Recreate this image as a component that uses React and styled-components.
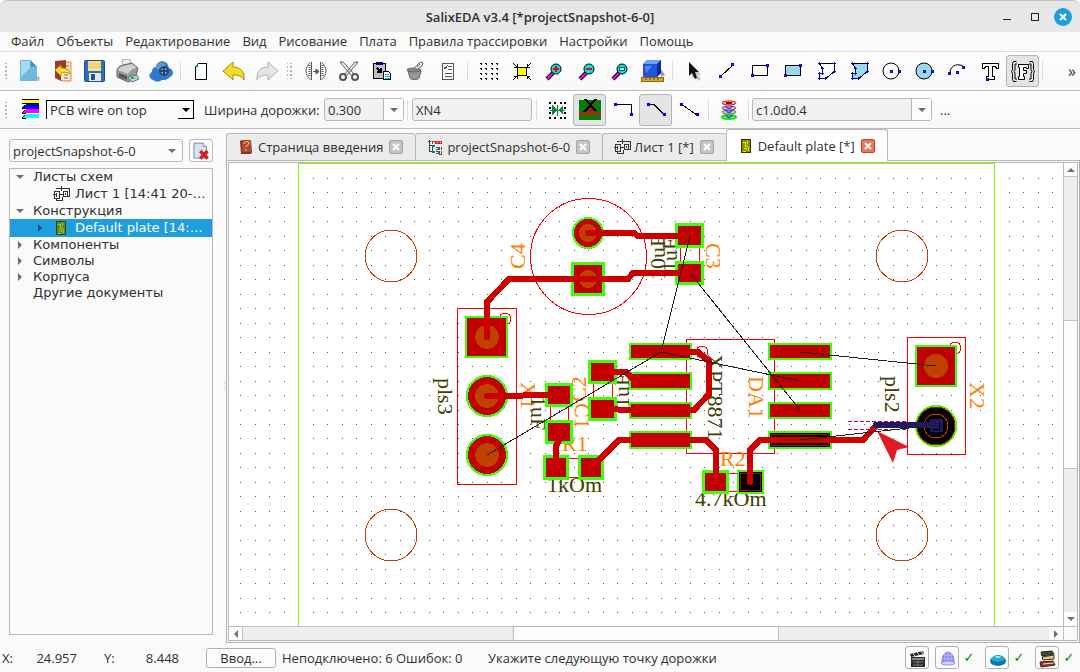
import React from 'react';
import styled, { createGlobalStyle } from 'styled-components';

const GlobalStyle = createGlobalStyle`
	* {
		box-sizing: border-box;
	}
	body {
		margin: 0;
		background: #fafafa;
		color: #303030;
		font: 13px/16px 'Open Sans', 'Noto Sans', sans-serif;
	}
	button,
	input,
	select {
		font: inherit;
		color: inherit;
	}
	svg {
		display: block;
		flex: none;
	}
`;

/* ---------- icons ---------- */

const Handle = ({ x, y }) => (
	<g>
		<rect x={x - 1} y={y - 1} width="3" height="3" fill="#0000ff" />
		<rect x={x} y={y} width="1" height="1" fill="#ff0000" />
	</g>
);

const Magnifier = ({ children }) => (
	<>
		<path d="M5 20l6-6" stroke="#000" strokeWidth="4" />
		<path d="M5 20l6-6" stroke="#ff00ff" strokeWidth="2" />
		<circle cx="14" cy="10" r="5" fill="#00e5e5" stroke="#000" />
		{children}
	</>
);

const polyPath = 'M6 4h15v8l-9 7h-6v-5h3v-5z';
const polyPoints = [[6, 4], [21, 4], [21, 12], [12, 19], [6, 19], [6, 14], [9, 14], [9, 9]];

const shapes = {
	file: (
		<>
			<path d="M5 22h17l1-3-2-2z" fill="#b9bcbe" />
			<path d="M3.500 1.500h10l6 6v14h-16z" fill="#6fb9de" stroke="#79b4d0" />
			<path d="M4 2h9v7l-9 9z" fill="#a5dbf0" />
			<path d="M13.500 1.500v6h6z" fill="#3c93c4" />
		</>
	),
	open: (
		<>
			<path d="M12 3h9v19h-9z" fill="#f0dfc4" stroke="#d98b4b" />
			<path d="M15 7h4M15 11h4M15 15h4M15 18h4" stroke="#806a58" />
			<path d="M5 2l11-1v8l-5 13-6-3z" fill="#963a30" />
			<path d="M11 11h8v10h-8z" fill="#f3e6cf" />
			<path d="M14 13h4M14 16h4M14 19h4" stroke="#806a58" />
			<path d="M5 11l6-5v3c5 0 9 2 9 6-3-2-6-2-9-1v3z" fill="#ffe03a" stroke="#c79500" />
		</>
	),
	save: (
		<>
			<rect x="1.500" y="1.500" width="20" height="21" rx="1" fill="#2f6fb6" stroke="#1d4f90" />
			<rect x="5" y="2" width="13" height="10" fill="#fbe08a" />
			<path d="M5 5h13M5 8h13" stroke="#e7bd4e" />
			<path d="M6 14h12v8h-12z" fill="#e2e8ee" />
			<path d="M8 15h4v6h-4z" fill="#31527f" />
		</>
	),
	print: (
		<>
			<path d="M6 1l8-1 1 8-7 2z" fill="#e8f1fb" stroke="#9aaec4" />
			<path d="M1 12c0-4 3-5 6-6l9-2 6 5-3 11-7 3-11-5z" fill="#9b9b9b" stroke="#666" />
			<path d="M2 11c2-3 4-4 6-4l8-2 5 4c-4 0-7 2-9 6z" fill="#d2d2d2" />
			<path d="M3 14l8 3v4l-8-3z" fill="#555" />
			<path d="M12 18l9-2 2 4-7 3z" fill="#b9dcf5" stroke="#4a7dac" />
			<path d="M15 19h3" stroke="#35a02c" strokeWidth="2" />
			<path d="M19 19h2" stroke="#e0c020" strokeWidth="2" />
		</>
	),
	cloud: (
		<>
			<path d="M4 21c-4-1-5-6-1-8 0-4 2-5 4-5 0-4 5-7 9-5 3 1 3 4 4 6 5 1 5 8 1 9-3 3-5 3-8 3-3 2-6 2-9 0z" fill="#2f78cf" />
			<path d="M7 8c1-4 6-6 9-3 1 3-2 4-4 4-3 2-5 2-5-1z" fill="#5c9ae2" />
			<circle cx="15" cy="12" r="4" fill="#8fb0d8" stroke="#29466e" strokeWidth="2" />
			<path d="M12 12h6M15 9v6" stroke="#29466e" strokeWidth="2" />
		</>
	),
	page: (
		<g shapeRendering="crispEdges">
			<path d="M9.500 4.500h8v16h-11v-13z" fill="#fff" stroke="#000" />
			<path d="M9 4v4h-3z" fill="#008080" />
		</g>
	),
	undo: <path d="M1 12L11 3v5c7 0 12 4 11 13-2-4-6-5-11-5v5z" fill="#f5dc22" stroke="#a98a12" />,
	redo: <path d="M23 12L13 3v5C6 8 1 12 2 21c2-4 6-5 11-5v5z" fill="#e5e5e5" stroke="#b4b4b4" />,
	mirror: (
		<g fill="none" stroke="#555">
			<path d="M6.500 3.500c-6 4-6 13 0 17M17.500 3.500c6 4 6 13 0 17" />
			<path d="M7.500 3v18M16.500 3v18" />
			<path d="M5.500 6v12M18.500 6v12" strokeDasharray="1 1" strokeWidth="2" />
			<path d="M9 12.500h5" />
			<path d="M12 10l3 2.500-3 2.500z" fill="#555" />
		</g>
	),
	cut: (
		<g fill="none" stroke="#555">
			<path d="M3 3l3 0 12 13M21 3l-3 0L7 16M3 3l11 13M21 3L10 16" />
			<circle cx="6" cy="18" r="3" strokeWidth="2" />
			<circle cx="18" cy="18" r="3" strokeWidth="2" />
		</g>
	),
	paste: (
		<g shapeRendering="crispEdges">
			<rect x="3.500" y="4.500" width="12" height="15" fill="#c0c0c0" stroke="#000" />
			<path d="M6 3h7v3h-7z" fill="#000080" />
			<path d="M7 9l4 4M11 9v4h-4" stroke="#000" strokeWidth="2" fill="none" />
			<path d="M13.500 12.500h5l2 2v6h-7z" fill="#fff" stroke="#000" />
			<path d="M15 15.500h4M15 17.500h5M15 19.500h5" stroke="#00b0d0" />
		</g>
	),
	bucket: (
		<g stroke="#666" fill="none">
			<path d="M5 12l2 7c1 2 8 2 9 0l2-7z" fill="#999" />
			<ellipse cx="11" cy="11" rx="7" ry="2" fill="#888" />
			<path d="M11 10l4-5 3-2 2 1-1 3-4 3z" fill="#eee" />
			<path d="M14 8l3-3" />
		</g>
	),
	list: (
		<g shapeRendering="crispEdges" stroke="#555" fill="none">
			<rect x="6.500" y="4.500" width="11" height="16" />
			<path d="M12 7.500h4M12 10.500h4M9 14.500h7M9 17.500h7M8 8l1 2 3-4" />
		</g>
	),
	grid: (
		<g fill="#000" shapeRendering="crispEdges">
			{[4, 9, 14, 19].map((y) => [4, 9, 15, 20].map((x) => <path key={`${x}-${y}`} d={`M${x} ${y}h2v2h-1v-1h-1z`} />))}
		</g>
	),
	fit: (
		<g stroke="#000" fill="none" shapeRendering="crispEdges">
			<rect x="8.500" y="8.500" width="9" height="8" fill="#ffff00" />
			<path d="M4 4l4 4M22 4l-4 4M4 21l4-4M22 21l-4-4M8 5v3h-3M18 5v3h3M8 20v-3h-3M18 20v-3h3" />
		</g>
	),
	zoomIn: (
		<Magnifier>
			<path d="M11 10h6M14 7v6" stroke="#f00000" strokeWidth="2" />
		</Magnifier>
	),
	zoomOut: (
		<Magnifier>
			<path d="M11 10h6" stroke="#f00000" strokeWidth="2" />
		</Magnifier>
	),
	zoomFit: (
		<Magnifier>
			<rect x="11.500" y="8.500" width="5" height="3" fill="#d4f5f5" stroke="#006060" />
		</Magnifier>
	),
	cube: (
		<>
			<path d="M19 9l5 7-4 2z" fill="#999" />
			<path d="M2 5l4-4h14v13l-4 4h-14z" fill="#1d55dd" />
			<path d="M2 5l4-4h14l-4 4z" fill="#6fa4ff" />
			<path d="M20 1v13l-4 4v-13z" fill="#0b2d96" />
			<path d="M4 7h7l-6 7z" fill="#5c8cf5" />
			<rect x="0.500" y="18.500" width="22" height="4" fill="#dba520" stroke="#8b6510" />
			<path d="M5 19v2M9 19v2M13 19v2M17 19v2" stroke="#6a4a08" />
		</>
	),
	cursor: (
		<>
			<path d="M11 6v14l3-3 3 5 3-2-3-4h3z" fill="#c4c4c4" />
			<path d="M8 3v14l3-3 3 6 2-1-2-6h4z" fill="#111" />
		</>
	),
	line: (
		<g shapeRendering="crispEdges">
			<path d="M7 17L19 6" stroke="#000" />
			<Handle x={6} y={17} />
			<Handle x={18} y={5} />
		</g>
	),
	rect: (
		<g shapeRendering="crispEdges">
			<rect x="5.500" y="6.500" width="15" height="10" fill="none" stroke="#000" />
			<Handle x={5} y={16} />
			<Handle x={20} y={6} />
		</g>
	),
	rectFill: (
		<g shapeRendering="crispEdges">
			<rect x="5.500" y="6.500" width="15" height="10" fill="#99d9ea" stroke="#000" />
			<Handle x={5} y={16} />
			<Handle x={20} y={6} />
		</g>
	),
	poly: (
		<g shapeRendering="crispEdges">
			<path d={polyPath} transform="translate(.5 .5)" fill="none" stroke="#000" />
			{polyPoints.map(([x, y]) => <path key={`${x}-${y}`} d={`M${x - 1} ${y}h3v1h-3zM${x} ${y - 1}h1v3h-1z`} fill="#0000ff" />)}
		</g>
	),
	polyFill: (
		<g shapeRendering="crispEdges">
			<path d={polyPath} transform="translate(.5 .5)" fill="#99d9ea" stroke="#000" />
			{polyPoints.map(([x, y]) => <path key={`${x}-${y}`} d={`M${x - 1} ${y}h3v1h-3zM${x} ${y - 1}h1v3h-1z`} fill="#0000ff" />)}
		</g>
	),
	circle: (
		<>
			<circle cx="12" cy="12" r="8" fill="none" stroke="#000" />
			<Handle x={12} y={12} />
			<Handle x={20} y={12} />
		</>
	),
	circleFill: (
		<>
			<circle cx="12" cy="12" r="8" fill="#99d9ea" stroke="#000" />
			<Handle x={12} y={12} />
			<Handle x={20} y={12} />
		</>
	),
	arc: (
		<>
			<path d="M5 14C5 5 15 4 19 8" fill="none" stroke="#000" />
			<Handle x={4} y={14} />
			<Handle x={18} y={8} />
			<Handle x={12} y={13} />
		</>
	),
	text: (
		<g shapeRendering="crispEdges">
			<path d="M4.500 4.500h16v5h-2l-1-2h-3v10h2v3h-8v-3h2v-10h-3l-1 2h-2z" fill="#fff" stroke="#000" />
			<Handle x={9} y={20} />
		</g>
	),
	field: (
		<g fill="#fff" stroke="#000">
			<path d="M5.500 2.500h-3l-1 2v6l-1 2 1 2v6l1 2h3M18.500 2.500h3l1 2v6l1 2-1 2v6l-1 2h-3" fill="none" />
			<path d="M6 5h-2v6l-1 1.500 1 1.500v6h2M18 5h2v6l1 1.500-1 1.500v6h-2" fill="none" />
			<path d="M7.500 5.500h10v4h-2v-1h-3v3h3v3h-3v3h1v3h-6v-3h1v-9h-1z" />
		</g>
	),
	layers: (
		<g shapeRendering="crispEdges">
			<path d="M4 5l4-4h13v4z" fill="#ffff00" />
			<path d="M4 10l4-4h13v5h-17z" fill="#0000ff" />
			<path d="M4 15l4-4h13v4h-17z" fill="#ff00ff" />
			<path d="M4 20l4-4h13v4h-17z" fill="#00ffff" />
			<path d="M4 1.500h17M4 5.500h17M4 10.500h4M4 15.500h4M4 20.500h4M4 10l3-3M4 15l3-3M4 20l3-3" stroke="#000" />
		</g>
	),
	snap: (
		<g shapeRendering="crispEdges">
			{[4, 9, 15, 19].map((x) => [4, 19].map((y) => <rect key={`${x}-${y}`} x={x} y={y} width="2" height="2" fill="#000" />))}
			{[4, 19].map((x) => [9, 14].map((y) => <rect key={`${x}-${y}`} x={x} y={y} width="2" height="2" fill="#000" />))}
			<path d="M7 7l5 5-5 5zM18 7l-5 5 5 5z" fill="#16803c" />
			<path d="M12.500 7v11M5 12.500h15" stroke="#16803c" />
		</g>
	),
	mask: (
		<g shapeRendering="crispEdges">
			<rect x="1" y="2" width="22" height="20" fill="#00800f" />
			<rect x="8" y="7" width="9" height="7" fill="#803010" />
			<path d="M1 16h22" stroke="#ff0000" strokeWidth="2" />
			<path d="M7 1l11 12M18 1l-12 13" stroke="#000" strokeWidth="2" />
		</g>
	),
	ortho: (
		<g shapeRendering="crispEdges">
			<path d="M4 6.500h16v10" fill="none" stroke="#000" />
			<rect x="3" y="5" width="3" height="3" fill="#0000ff" />
			<rect x="19" y="15" width="3" height="3" fill="#0000ff" />
		</g>
	),
	bend: (
		<g shapeRendering="crispEdges">
			<path d="M4 6.500h6l10 10" fill="none" stroke="#000" />
			<rect x="3" y="5" width="3" height="3" fill="#0000ff" />
			<rect x="19" y="15" width="3" height="3" fill="#0000ff" />
		</g>
	),
	free: (
		<g shapeRendering="crispEdges">
			<path d="M4 6l16 11" stroke="#000" />
			<rect x="3" y="5" width="3" height="3" fill="#0000ff" />
			<rect x="19" y="15" width="3" height="3" fill="#0000ff" />
		</g>
	),
	via: (
		<g fill="#c4c4c4">
			<ellipse cx="12" cy="19" rx="7" ry="2" stroke="#00f000" strokeWidth="2" />
			<ellipse cx="12" cy="14" rx="7" ry="2" stroke="#707070" />
			<ellipse cx="12" cy="10" rx="7" ry="2" stroke="#904090" />
			<ellipse cx="12" cy="5" rx="7" ry="2" stroke="#ff0000" />
			<path d="M9 5h6" stroke="#a00" strokeWidth="2" />
			<path d="M9 8c0 3 6 3 6 0M9 12c0 3 6 3 6 0M9 17c0 3 6 3 6 0" fill="none" stroke="#0000ff" />
		</g>
	),
	sheet: (
		<g shapeRendering="crispEdges" fill="none" stroke="#333" transform="translate(4 4)">
			<path d="M3 2.500h13v8h-2M8 0v5M1 5.500h5v7h-5zM10.500 5.500h4v5h-4zM6 8.500h4M0 8.500h4M3 12v2.500h6v-4M3.500 7v4M12.500 7v2" />
		</g>
	),
	plate: (
		<g shapeRendering="crispEdges" transform="translate(7 5)">
			<rect x="0.500" y="0.500" width="9" height="13" fill="#5d8c20" stroke="#33420c" />
			<path d="M2 3h2v4h3M6 2v3M3 9h2v2M7 8v4M2 12h3" stroke="#a8c040" fill="none" />
		</g>
	),
	plateYellow: (
		<g shapeRendering="crispEdges" transform="translate(7 5)">
			<rect x="0.500" y="0.500" width="9" height="13" fill="#8c8c00" stroke="#333300" />
			<path d="M2 3h2v4h3M6 2v3M3 9h2v2M7 8v4M2 12h3" stroke="#e8e800" fill="none" />
		</g>
	),
	book: (
		<g transform="translate(6 5)">
			<path d="M0 1l2-1h9l1 13-2 1h-9z" fill="#8d2f25" />
			<path d="M2 0h9v12h-9z" fill="#a84a38" />
			<path d="M4 4c0-3 5-3 5-1 0 2-3 2-3 4M6 9v2" stroke="#ffe640" fill="none" />
		</g>
	),
	project: (
		<g shapeRendering="crispEdges" fill="none" transform="translate(4 4)">
			<path d="M1 2.500h3M2.500 1v12M2 6.500h4M2 12.500h4M9 12.500h2M5 7v6" stroke="#2a4a4a" />
			<path d="M5.500 5v-3h3v3M9.500 5v-3h2v2h-2M12.500 2h2v2h-2z" stroke="#c03030" />
			<path d="M9 8.500h2v2h-2M12.500 8v3M14.500 8v3M9 14.500h2v-3M12.500 12v3h2v-3" stroke="#555" />
			<path d="M5 6h3v2h-3zM5 12h3v2h-3z" fill="#008080" />
		</g>
	),
	removeDoc: (
		<>
			<path d="M3.500 2.500h11l4 4v14h-15z" fill="#d7e4f7" stroke="#5f7ca6" />
			<path d="M14.500 2.500v4h4" fill="#fff" stroke="#5f7ca6" />
			<path d="M11 12l9 9M20 12l-9 9" stroke="#d81e1e" strokeWidth="4" />
		</>
	),
	film: (
		<g>
			<rect x="5" y="10" width="14" height="10" fill="#2a2a2a" />
			<path d="M4 7l13-3 1 3-13 3z" fill="#222" />
			<path d="M7 6l2 3M11 5l2 3M15 4l2 3M6 12h12" stroke="#ddd" />
			<path d="M7 15h10M7 18h10M12 13v6" stroke="#777" />
		</g>
	),
	helmet: (
		<g>
			<path d="M6 15c0-13 12-13 12 0z" fill="#8585ff" stroke="#8080f0" />
			<path d="M8 8h8M7 12h10M12 5v10M9 6v9M15 6v9" stroke="#b8b8ff" />
			<ellipse cx="12" cy="16" rx="7" ry="2" fill="#d4d4ff" stroke="#8888f5" />
		</g>
	),
	blob: (
		<g>
			<ellipse cx="12" cy="14" rx="8" ry="5" fill="#087aa8" />
			<path d="M5 12c3-4 4-3 5-4h4c1 1 3 0 5 4-2 3-12 4-14 0z" fill="#26a8cc" />
			<ellipse cx="12" cy="10" rx="3" ry="1" fill="#9aeaf5" />
		</g>
	),
	books: (
		<g>
			<path d="M5 5l11-1 2 3-12 2z" fill="#38582c" stroke="#222" />
			<path d="M6 10l12-2v4l-11 1z" fill="#e6c890" stroke="#3c2a18" />
			<path d="M4 15l13-1 2 4-14 2z" fill="#8d3a2c" stroke="#3c1a14" />
			<path d="M7 17l11-1" stroke="#f0d8c0" />
		</g>
	),
};

const Icon = ({ name, size = 24 }) => (
	<svg width={size} height={size} viewBox="0 0 24 24" aria-hidden="true">
		{shapes[name]}
	</svg>
);

const Triangle = ({ dir = 'down', color = '#707070' }) => {
	const paths = {
		down: 'M0 2h8l-4 4z',
		up: 'M0 6h8l-4-4z',
		left: 'M6 0v8l-4-4z',
		right: 'M2 0v8l4-4z',
	};
	return (
		<svg width="8" height="8" aria-hidden="true">
			<path d={paths[dir]} fill={color} />
		</svg>
	);
};

/* ---------- data ---------- */

const menu = ['Файл', 'Объекты', 'Редактирование', 'Вид', 'Рисование', 'Плата', 'Правила трассировки', 'Настройки', 'Помощь'];

const mainTools = [
	'grip', 'file', 'open', 'save', 'print', 'cloud', 'sep', 'page', 'undo', 'redo',
	'grip', 'mirror', 'cut', 'paste', 'bucket', 'list', 'sep',
	'grid', 'fit', 'zoomIn', 'zoomOut', 'zoomFit', 'cube', 'sep',
	'cursor', 'line', 'rect', 'rectFill', 'poly', 'polyFill', 'circle', 'circleFill', 'arc', 'text', 'field', 'sep',
];

const tree = [
	{ label: 'Листы схем', arrow: 'down' },
	{ label: 'Лист 1 [14:41 20-06]', icon: 'sheet', child: true },
	{ label: 'Конструкция', arrow: 'down' },
	{ label: 'Default plate [14:41 20-06]', icon: 'plate', arrow: 'right', child: true, selected: true },
	{ label: 'Компоненты', arrow: 'right' },
	{ label: 'Символы', arrow: 'right' },
	{ label: 'Корпуса', arrow: 'right' },
	{ label: 'Другие документы' },
];

const tabs = [
	{ label: 'Страница введения', icon: 'book' },
	{ label: 'projectSnapshot-6-0', icon: 'project' },
	{ label: 'Лист 1 [*]', icon: 'sheet' },
	{ label: 'Default plate [*]', icon: 'plateYellow', active: true },
];

const holes = [[391, 256], [902, 256], [391, 535], [902, 535]];

const outlines = [
	[457, 308, 59, 176], [686, 339, 88, 114], [907, 337, 58, 117],
	[680, 247, 19, 15], [550, 406, 18, 15], [593, 383, 19, 15],
	[568, 458, 12, 19], [727, 473, 12, 18],
];

// x, y, width, height, border, highlighted
const pads = [
	[571, 262, 34, 34, 3], [675, 223, 29, 25, 3], [675, 261, 29, 24, 3],
	[465, 316, 43, 42, 2], [545, 383, 28, 24, 3], [545, 420, 28, 24, 3],
	[543, 455, 26, 25, 3], [578, 455, 26, 25, 3], [588, 360, 29, 24, 3], [588, 397, 29, 24, 3],
	[629, 343, 63, 17, 2], [629, 372, 63, 18, 2], [629, 402, 63, 17, 2], [629, 431, 63, 18, 2],
	[768, 343, 64, 17, 2], [768, 372, 64, 18, 2], [768, 402, 64, 17, 2], [768, 431, 64, 18, 2, true],
	[702, 470, 27, 24, 3], [737, 470, 27, 24, 2, true], [915, 345, 42, 42, 2],
];

const roundPads = [[588, 233, 16], [487, 396, 21], [487, 455, 21]];
const drills = [[588, 233, 9], [588, 279, 9], [487, 337, 12], [487, 396, 12], [487, 455, 12], [936, 366, 12]];

const traces = [
	'588,233 634,233 638,236 690,236',
	'487,337 487,302 509,279 628,279 633,273 690,273',
	'487,396 561,395',
	'559,431 559,440 556,446 556,468',
	'592,467 619,440 706,440 716,450 716,482',
	'603,372 626,372 635,381 662,381',
	'603,409 632,410 694,410 709,394 709,361 698,352 660,352',
	'750,482 750,450 760,440 863,440 876,426',
];

const ratsnest = [
	'690,236 661,352', '690,273 800,410', '661,352 487,455', '661,352 800,381', '800,352 936,366', '800,440 936,425',
];

// text, x, baseline, angle, kind
const labels = [
	['C4', 525, 269, -90], ['C3', 706, 243, 90], ['X1', 521, 382, 90], ['C2', 586, 402, -90],
	['C1', 575, 403, 90], ['DA1', 749, 376, 90], ['X2', 970, 382, 90], ['R1', 562, 451, 0], ['R2', 720, 466, 0],
	['10uF', 665, 280, -90, 'value'], ['1uF', 677, 272, -90, 'value'], ['1uF', 531, 396, 90, 'value'],
	['1uF', 629, 408, -90, 'value'], ['pls3', 438, 378, 90, 'value'], ['pls2', 885, 376, 90, 'value'],
	['XPT8871', 708, 354, 90, 'value'], ['1kOm', 547, 492, 0, 'value'], ['4.7kOm', 695, 506, 0, 'value'],
];

const gridDots = [];
for (let row = 0; row < 31; row += 1) {
	for (let col = 0; col < 57; col += 1) {
		gridDots.push(`M${Math.round(240 + col * 14.5)} ${Math.round(178 + row * 14.47)}h1v1h-1z`);
	}
}

/* ---------- parts ---------- */

function Combo({ value, label, variant, width }) {
	return (
		<ComboBox $variant={variant} $width={width}>
			<select aria-label={label} defaultValue={value}>
				<option>{value}</option>
			</select>
			<ComboArrow $variant={variant}>
				<Triangle color={variant === 'classic' ? '#000' : undefined} />
			</ComboArrow>
		</ComboBox>
	);
}

function Board() {
	return (
		<BoardSvg role="img" aria-label="Default plate">
			<g transform="translate(-229 -163)" shapeRendering="crispEdges">
				<path d={gridDots.join('')} fill="#505050" />
				<path d="M298.500 640V163.500H994.500V640" fill="none" stroke="#80ff00" />
				<g fill="none" stroke="#c04000">
					{holes.map(([x, y]) => <circle key={`${x}-${y}`} cx={x} cy={y} r="26" />)}
				</g>
				<g fill="none" stroke="#ff0000">
					<circle cx="588.5" cy="256.5" r="58" />
					<circle cx="505" cy="319" r="6" />
					<circle cx="702" cy="352" r="6" />
					<circle cx="955" cy="348" r="6" />
					{outlines.map(([x, y, w, h]) => <rect key={`${x}-${y}`} x={x + 0.5} y={y + 0.5} width={w} height={h} />)}
				</g>
				{labels.map(([text, x, y, angle, kind]) => (
					<BoardText key={`${text}-${x}`} $value={kind === 'value'} transform={`translate(${x} ${y}) rotate(${angle})`}>
						{text}
					</BoardText>
				))}
				{pads.map(([x, y, w, h, b, hot]) => (
					<g key={`${x}-${y}`}>
						<rect x={x} y={y} width={w} height={h} fill="#40ff00" />
						<rect x={x + b} y={y + b} width={w - b * 2} height={h - b * 2} fill={hot ? '#000' : '#c00000'} />
						{hot && <rect x={x + 3.5} y={y + 3.5} width={w - 7} height={h - 7} fill="none" stroke="#c00000" />}
					</g>
				))}
				{roundPads.map(([x, y, r]) => <circle key={y} cx={x} cy={y} r={r - 1} fill="#c00000" stroke="#40ff00" strokeWidth="2" />)}
				{drills.map(([x, y, r]) => <circle key={`${x}-${y}`} cx={x} cy={y} r={r} fill="#c04000" />)}
				<circle cx="936" cy="426" r="20" fill="#000" stroke="#40ff00" strokeWidth="2" />
				<circle cx="936" cy="426" r="19" fill="none" stroke="#c00000" />
				<circle cx="936" cy="426" r="12" fill="none" stroke="#c04000" />
				<g fill="none" stroke="#cc0000" strokeWidth="6" strokeLinejoin="round" strokeLinecap="round">
					{traces.map((points) => <polyline key={points} points={points} />)}
				</g>
				<path d="M848 421.500h60M848 429.500h60" stroke="#c00040" strokeDasharray="4 2" />
				<path d="M876 425h60" stroke="#221a60" strokeWidth="6" strokeLinecap="round" />
				<rect x="930" y="419" width="13" height="13" fill="#221a60" />
				<path d="M933 429.500h6.500v-7" fill="none" stroke="#000" />
				<g stroke="#202020">
					{ratsnest.map((points) => <polyline key={points} points={points} />)}
				</g>
				<path d="M877 431L909 447L897 450L893 463Z" fill="#e01b24" shapeRendering="auto" />
			</g>
		</BoardSvg>
	);
}

function MainToolbar() {
	return (
		<Toolbar>
			{mainTools.map((name, index) => {
				if (name === 'grip') return <Grip key={index} />;
				if (name === 'sep') return <Separator key={index} />;
				return (
					<ToolButton key={name} type="button" aria-label={name} $pressed={name === 'field'}>
						<Icon name={name} />
					</ToolButton>
				);
			})}
			<MoreButton type="button">»</MoreButton>
		</Toolbar>
	);
}

function WireToolbar() {
	return (
		<Toolbar $tall>
			<Grip />
			<LayerPicker>
				<Icon name="layers" />
				<Combo value="PCB wire on top" label="Слой" variant="classic" width={148} />
			</LayerPicker>
			<WidthLabel>Ширина дорожки:</WidthLabel>
			<Combo value="0.300" label="Ширина дорожки" variant="editable" width={80} />
			<Separator />
			<NetInput aria-label="Цепь" defaultValue="XN4" />
			<Separator />
			<ToolButton type="button" aria-label="snap"><Icon name="snap" /></ToolButton>
			<ToolButton type="button" aria-label="mask" $pressed><Icon name="mask" /></ToolButton>
			<ToolButton type="button" aria-label="ortho"><Icon name="ortho" /></ToolButton>
			<ToolButton type="button" aria-label="bend" $pressed><Icon name="bend" /></ToolButton>
			<ToolButton type="button" aria-label="free"><Icon name="free" /></ToolButton>
			<Separator />
			<ToolButton type="button" aria-label="via"><Icon name="via" /></ToolButton>
			<Separator />
			<Combo value="c1.0d0.4" label="Переход" variant="editable" width={180} />
			<DotsButton type="button">...</DotsButton>
		</Toolbar>
	);
}

export default function App() {
	return (
		<Window>
			<GlobalStyle />
			<TitleBar>
				<Title>SalixEDA v3.4 [*projectSnapshot-6-0]</Title>
				<WindowButton type="button" aria-label="Свернуть">
					<svg width="18" height="18"><path d="M5 11.500h8" stroke="#222" /></svg>
				</WindowButton>
				<WindowButton type="button" aria-label="Развернуть">
					<svg width="18" height="18"><rect x="5.500" y="5.500" width="7" height="7" fill="none" stroke="#222" /></svg>
				</WindowButton>
				<WindowButton type="button" aria-label="Закрыть">
					<svg width="18" height="18">
						<circle cx="9" cy="9" r="9" fill="#1f9ede" />
						<path d="M6 6l6 6M12 6l-6 6" stroke="#fff" strokeWidth="2" />
					</svg>
				</WindowButton>
			</TitleBar>
			<MenuBar>
				{menu.map((item) => <button key={item} type="button">{item}</button>)}
			</MenuBar>
			<MainToolbar />
			<WireToolbar />
			<Workspace>
				<Sidebar>
					<ProjectRow>
						<Combo value="projectSnapshot-6-0" label="Проект" variant="project" />
						<RemoveButton type="button" aria-label="Закрыть проект"><Icon name="removeDoc" size={20} /></RemoveButton>
					</ProjectRow>
					<Tree>
						{tree.map((row) => (
							<TreeRow key={row.label} $child={row.child} $selected={row.selected}>
								<TreeArrow>{row.arrow && <Triangle dir={row.arrow} color={row.selected ? '#11557a' : '#707070'} />}</TreeArrow>
								{row.icon && <Icon name={row.icon} />}
								<span>{row.label}</span>
							</TreeRow>
						))}
					</Tree>
				</Sidebar>
				<Splitter><svg width="3" height="9"><path d="M1 1h1M1 4h1M1 7h1" stroke="#bbb" /></svg></Splitter>
				<Editor>
					<Tabs>
						{tabs.map((tab) => (
							<Tab key={tab.label} $active={tab.active}>
								<Icon name={tab.icon} />
								<TabName type="button">{tab.label}</TabName>
								<TabClose type="button" aria-label="Закрыть вкладку" $active={tab.active}>
									<svg width="12" height="12"><path d="M3 3l6 6M9 3l-6 6" stroke="#fff" strokeWidth="2" /></svg>
								</TabClose>
							</Tab>
						))}
					</Tabs>
					<Pane>
						<Viewport>
							<Board />
							<ScrollTrack $vertical>
								<ScrollStep type="button" aria-label="Вверх"><Triangle dir="up" /></ScrollStep>
								<Groove />
								<Thumb $vertical />
								<Groove />
								<ScrollStep type="button" aria-label="Вниз"><Triangle /></ScrollStep>
							</ScrollTrack>
							<ScrollTrack>
								<ScrollStep type="button" aria-label="Влево"><Triangle dir="left" /></ScrollStep>
								<Groove />
								<Thumb />
								<Groove />
								<ScrollStep type="button" aria-label="Вправо"><Triangle dir="right" /></ScrollStep>
							</ScrollTrack>
							<ScrollCorner />
						</Viewport>
					</Pane>
				</Editor>
			</Workspace>
			<StatusBar>
				<Coord><span>X:</span><span>24.957</span></Coord>
				<Coord><span>Y:</span><span>8.448</span></Coord>
				<EnterButton type="button">Ввод...</EnterButton>
				<NetStatus>Неподключено: 6 Ошибок: 0</NetStatus>
				<Hint>Укажите следующую точку дорожки</Hint>
				<StatusButton type="button" aria-label="Видео"><Icon name="film" /></StatusButton>
				{['helmet', 'blob', 'books'].map((name) => (
					<React.Fragment key={name}>
						<StatusButton type="button" aria-label={name}><Icon name={name} /></StatusButton>
						<Check>✓</Check>
					</React.Fragment>
				))}
			</StatusBar>
		</Window>
	);
}

/* ---------- styles ---------- */

const Window = styled.div`
	display: flex;
	flex-direction: column;
	height: 100vh;
	overflow: hidden;
`;
const TitleBar = styled.header`
	display: flex;
	align-items: center;
	gap: 10px;
	height: 32px;
	padding: 0 8px 0 92px;
	background: #e7e7e7;
	border-top: 1px solid #c4c4c4;
	border-radius: 7px 7px 0 0;
`;
const Title = styled.h1`
	flex: 1;
	margin: 0;
	font-size: 13px;
	font-weight: 600;
	line-height: 16px;
	text-align: center;
`;
const WindowButton = styled.button`
	border: 0;
	padding: 0;
	background: none;
`;
const MenuBar = styled.nav`
	display: flex;
	align-items: flex-start;
	gap: 12px;
	height: 20px;
	padding: 0 11px;
	border-bottom: 1px solid #dcdcdc;
	button {
		height: 18px;
		border: 0;
		padding: 0;
		background: none;
		white-space: nowrap;
	}
`;
const Toolbar = styled.div`
	display: flex;
	align-items: center;
	height: ${(props) => (props.$tall ? '38px' : '39px')};
	background: linear-gradient(#fefefe, #f8f8f8);
	border-bottom: 1px solid #bdbdbd;
`;
const Grip = styled.span`
	flex: none;
	width: 16px;
	height: 16px;
	background: radial-gradient(circle, #b8b8b8 1px, transparent 1px) center / 4px 4px;
	background-clip: content-box;
	padding: 0 6px 0 4px;
	&:first-child {
		width: 12px;
		padding: 0 3px 0 4px;
	}
`;
const Separator = styled.span`
	flex: none;
	width: 1px;
	height: 20px;
	margin: 0 3px;
	background: #dcdcdc;
`;
const ToolButton = styled.button`
	display: grid;
	place-items: center;
	flex: none;
	width: 33px;
	height: 32px;
	padding: 0;
	border: 1px solid ${(props) => (props.$pressed ? '#b4b4b4' : 'transparent')};
	border-radius: 3px;
	background: ${(props) => (props.$pressed ? '#e4e4e4' : 'none')};
`;
const MoreButton = styled.button`
	margin-left: auto;
	border: 0;
	padding: 0 4px;
	background: none;
	font-size: 16px;
`;
const LayerPicker = styled.div`
	display: flex;
	align-items: center;
	gap: 4px;
	padding: 0 10px 0 6px;
`;
const WidthLabel = styled.span`
	flex: none;
	width: 120px;
	white-space: nowrap;
`;
const ComboBox = styled.span`
	display: grid;
	grid-template-columns: minmax(0, 1fr) 20px;
	flex: ${(props) => (props.$width ? `0 0 ${props.$width}px` : '1')};
	height: ${(props) => (props.$variant === 'classic' ? '19px' : '23px')};
	border: 1px solid #b8b8b8;
	border-radius: 3px;
	background: #fafafa;
	${(props) => props.$variant === 'classic' && 'border-color: #000; border-width: 1px 0 0 1px; border-radius: 0;'}
	${(props) => props.$variant === 'editable' && 'background: #f1f1f1;'}
	select {
		grid-area: 1 / 1 / 2 / 3;
		appearance: none;
		min-width: 0;
		border: 0;
		padding: 0 20px 0 3px;
		background: none;
	}
`;
const ComboArrow = styled.span`
	grid-area: 1 / 2;
	display: grid;
	place-items: center;
	pointer-events: none;
	${(props) => props.$variant === 'editable' && 'border-left: 1px solid #b8b8b8; background: #fcfcfc;'}
	${(props) => props.$variant === 'classic' && 'width: 16px; margin-left: 4px; border: 1px solid #000; border-width: 0 1px 1px 0;'}
`;
const NetInput = styled.input`
	flex: none;
	width: 120px;
	height: 23px;
	margin: 0 1px;
	padding: 0 3px;
	border: 1px solid #b8b8b8;
	border-radius: 3px;
	background: #f1f1f1;
`;
const DotsButton = styled.button`
	border: 0;
	padding: 0 8px;
	background: none;
`;
const Workspace = styled.main`
	display: flex;
	flex: 1;
	min-height: 0;
`;
const Sidebar = styled.aside`
	display: flex;
	flex-direction: column;
	flex: 0 0 213px;
	gap: 6px;
	min-width: 0;
	padding: 10px 0 8px 9px;
`;
const ProjectRow = styled.div`
	display: flex;
	gap: 6px;
`;
const RemoveButton = styled.button`
	display: grid;
	place-items: center;
	width: 24px;
	padding: 0;
	border: 1px solid #b8b8b8;
	border-radius: 3px;
	background: #fcfcfc;
`;
const Tree = styled.ul`
	flex: 1;
	margin: 0;
	padding: 0;
	border: 1px solid #b8b8b8;
	list-style: none;
	font-family: 'DejaVu Sans', sans-serif;
`;
const TreeRow = styled.li`
	display: flex;
	align-items: center;
	height: ${(props) => (props.$child ? '18px' : '16px')};
	padding: 0 6px 0 ${(props) => (props.$child ? '26px' : '6px')};
	background: ${(props) => (props.$selected ? '#1f9ede' : 'none')};
	color: ${(props) => (props.$selected ? '#fff' : 'inherit')};
	span:last-child {
		overflow: hidden;
		text-overflow: ellipsis;
		white-space: nowrap;
	}
`;
const TreeArrow = styled.span`
	flex: none;
	width: 17px;
	${TreeRow} > & + svg {
		margin-right: 2px;
		margin-left: -4px;
	}
`;
const Splitter = styled.div`
	display: grid;
	flex: none;
	place-items: center end;
	width: 13px;
`;
const Editor = styled.section`
	display: flex;
	flex: 1;
	flex-direction: column;
	min-width: 0;
`;
const Tabs = styled.div`
	display: flex;
	align-items: flex-end;
	height: 32px;
	&::after {
		content: '';
		flex: 1;
		border-bottom: 1px solid #b8b8b8;
	}
`;
const Tab = styled.div`
	display: flex;
	align-items: center;
	height: ${(props) => (props.$active ? '32px' : '28px')};
	padding: 0 12px 0 7px;
	border: 1px solid #b8b8b8;
	border-bottom: ${(props) => (props.$active ? '0' : '1px solid #b8b8b8')};
	border-right-width: ${(props) => (props.$active ? '1px' : '0')};
	border-radius: 3px 3px 0 0;
	background: ${(props) => (props.$active ? '#fff' : '#ebebeb')};
`;
const TabName = styled.button`
	border: 0;
	padding: 0 6px 0 0;
	background: none;
	white-space: nowrap;
`;
const TabClose = styled.button`
	display: grid;
	place-items: center;
	width: 14px;
	height: 14px;
	padding: 0;
	border: 1px solid ${(props) => (props.$active ? '#d83c28' : '#a4a4a4')};
	border-radius: 2px;
	background: ${(props) => (props.$active ? '#e4785c' : '#c4c4c4')};
`;
const Pane = styled.div`
	display: flex;
	flex: 1;
	min-height: 0;
	padding: 1px;
	border: 1px solid #b0b0b0;
	border-top: 0;
	background: #fafafa;
`;
const Viewport = styled.div`
	display: grid;
	flex: 1;
	grid-template: minmax(0, 1fr) 14px / minmax(0, 1fr) 14px;
	min-width: 0;
	border: 1px solid #b8b8b8;
`;
const BoardSvg = styled.svg`
	width: 100%;
	height: 100%;
	overflow: hidden;
	background: #fff;
`;
const BoardText = styled.text`
	fill: ${(props) => (props.$value ? '#404000' : '#ff8000')};
	font-family: 'Liberation Serif', serif;
	font-size: 22px;
`;
const ScrollTrack = styled.div`
	display: flex;
	flex-direction: ${(props) => (props.$vertical ? 'column' : 'row')};
	border: 0 solid #b8b8b8;
	border-width: ${(props) => (props.$vertical ? '0 0 0 1px' : '1px 0 0 0')};
`;
const ScrollStep = styled.button`
	display: grid;
	place-items: center;
	flex: 0 0 14px;
	padding: 0;
	border: 0;
	background: #fdfdfd;
`;
const ScrollCorner = styled.span`
	border: 1px solid #c0c0c0;
	border-width: 1px 0 0 1px;
`;
const Groove = styled.span`
	flex: 1;
	background: #eeeeee;
	${ScrollStep} + & {
		box-shadow: 0 0 0 1px #c4c4c4;
		clip-path: inset(-1px 0 0 -1px);
	}
`;
const Thumb = styled.span`
	flex: 0 0 ${(props) => (props.$vertical ? '32%' : '32%')};
	border: 1px solid #c0c0c0;
	border-width: ${(props) => (props.$vertical ? '1px 0' : '0 1px')};
	background: #fdfdfd;
`;
const StatusBar = styled.footer`
	display: flex;
	align-items: center;
	height: 29px;
	padding: 0 1px 0 2px;
	white-space: nowrap;
`;
const Coord = styled.span`
	display: flex;
	justify-content: space-between;
	width: 75px;
	margin-right: 27px;
`;
const EnterButton = styled.button`
	width: 70px;
	height: 20px;
	padding: 0;
	border: 1px solid #b0b0b0;
	border-radius: 3px;
	background: #fcfcfc;
`;
const NetStatus = styled.span`
	width: 212px;
	padding-left: 6px;
`;
const Hint = styled.span`
	flex: 1;
`;
const StatusButton = styled.button`
	display: grid;
	place-items: center;
	width: 24px;
	height: 23px;
	margin-left: 6px;
	padding: 0;
	border: 1px solid #b0b0b0;
	border-radius: 3px;
	background: #fcfcfc;
`;
const Check = styled.span`
	width: 20px;
	color: #008000;
	font-family: 'DejaVu Sans', sans-serif;
	text-align: center;
`;
